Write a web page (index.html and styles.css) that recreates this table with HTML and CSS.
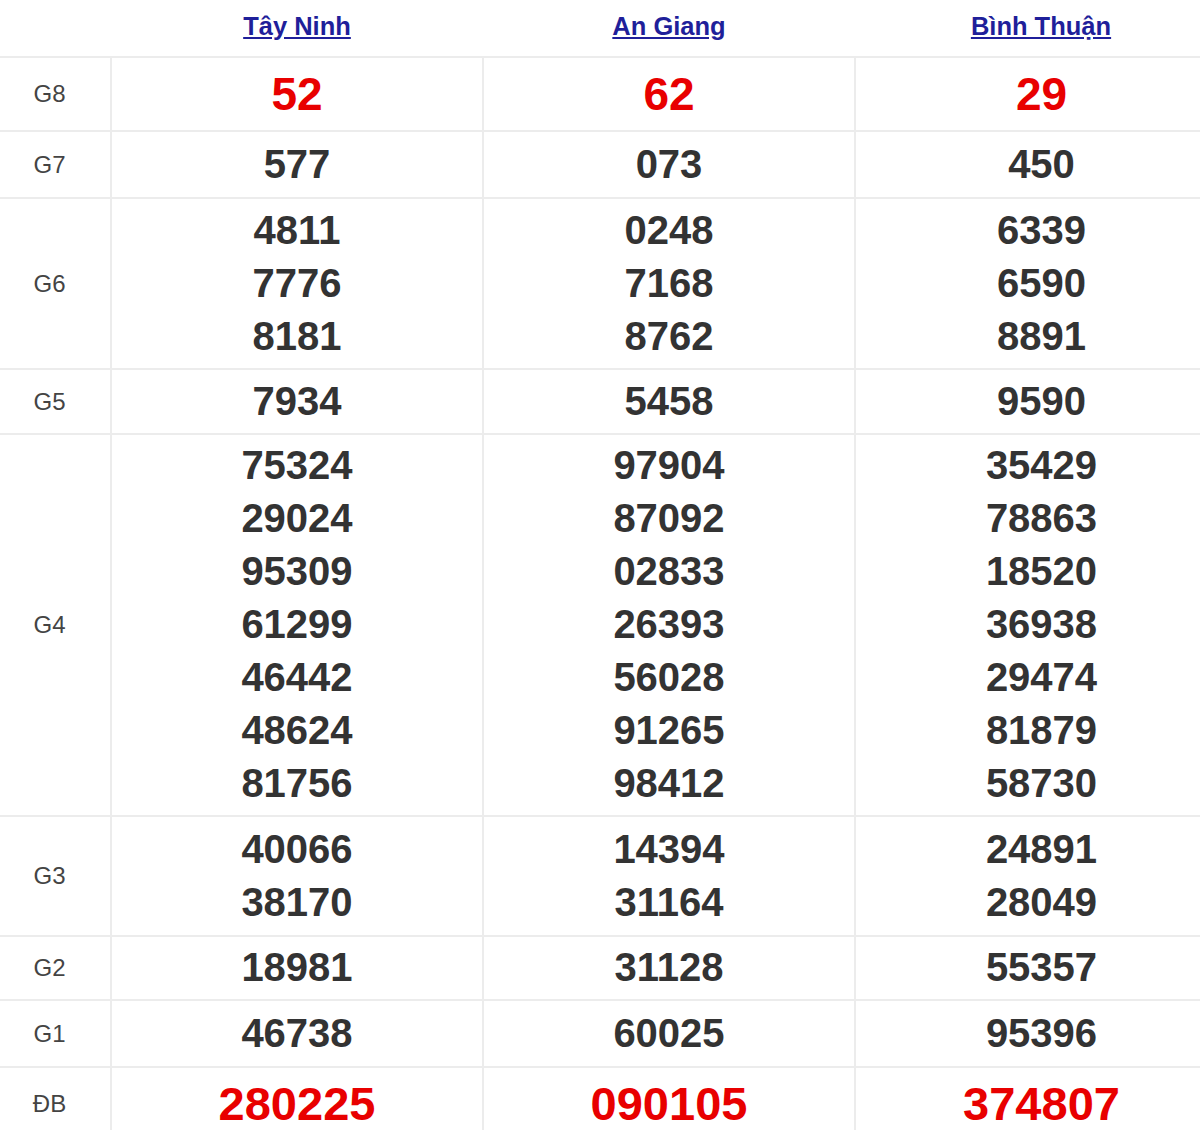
FILE: index.html
```html
<!DOCTYPE html>
<html lang="vi">
<head>
<meta charset="utf-8">
<title>Kết quả xổ số</title>
<link rel="stylesheet" href="styles.css">
</head>
<body>
<table class="kq">
  <colgroup>
    <col class="c-label">
    <col class="c-prov">
    <col class="c-prov">
    <col class="c-prov">
  </colgroup>
  <thead>
    <tr>
      <th></th>
      <th><a href="#">Tây Ninh</a></th>
      <th><a href="#">An Giang</a></th>
      <th><a href="#">Bình Thuận</a></th>
    </tr>
  </thead>
  <tbody>
    <tr class="g8">
      <td class="lbl">G8</td>
      <td class="num red"><div>52</div></td>
      <td class="num red"><div>62</div></td>
      <td class="num red"><div>29</div></td>
    </tr>
    <tr class="tall">
      <td class="lbl">G7</td>
      <td class="num"><div>577</div></td>
      <td class="num"><div>073</div></td>
      <td class="num"><div>450</div></td>
    </tr>
    <tr>
      <td class="lbl">G6</td>
      <td class="num"><div>4811</div><div>7776</div><div>8181</div></td>
      <td class="num"><div>0248</div><div>7168</div><div>8762</div></td>
      <td class="num"><div>6339</div><div>6590</div><div>8891</div></td>
    </tr>
    <tr>
      <td class="lbl">G5</td>
      <td class="num"><div>7934</div></td>
      <td class="num"><div>5458</div></td>
      <td class="num"><div>9590</div></td>
    </tr>
    <tr class="short">
      <td class="lbl">G4</td>
      <td class="num"><div>75324</div><div>29024</div><div>95309</div><div>61299</div><div>46442</div><div>48624</div><div>81756</div></td>
      <td class="num"><div>97904</div><div>87092</div><div>02833</div><div>26393</div><div>56028</div><div>91265</div><div>98412</div></td>
      <td class="num"><div>35429</div><div>78863</div><div>18520</div><div>36938</div><div>29474</div><div>81879</div><div>58730</div></td>
    </tr>
    <tr class="tall">
      <td class="lbl">G3</td>
      <td class="num"><div>40066</div><div>38170</div></td>
      <td class="num"><div>14394</div><div>31164</div></td>
      <td class="num"><div>24891</div><div>28049</div></td>
    </tr>
    <tr class="short">
      <td class="lbl">G2</td>
      <td class="num"><div>18981</div></td>
      <td class="num"><div>31128</div></td>
      <td class="num"><div>55357</div></td>
    </tr>
    <tr class="tall">
      <td class="lbl">G1</td>
      <td class="num"><div>46738</div></td>
      <td class="num"><div>60025</div></td>
      <td class="num"><div>95396</div></td>
    </tr>
    <tr class="db">
      <td class="lbl">ĐB</td>
      <td class="num red"><div>280225</div></td>
      <td class="num red"><div>090105</div></td>
      <td class="num red"><div>374807</div></td>
    </tr>
  </tbody>
</table>
</body>
</html>
```

FILE: styles.css
```css
html, body {
  margin: 0;
  padding: 0;
  overflow: hidden;
  background: #fff;
}

body {
  font-family: "Liberation Sans", Arial, sans-serif;
  color: #333;
}

.kq {
  width: 1226px;
  border-collapse: collapse;
  table-layout: fixed;
}

.c-label { width: 111px; }
.c-prov { width: 372px; }

.kq th {
  height: 52px;
  padding: 0 0 4px;
  vertical-align: middle;
  text-align: center;
  border-bottom: 2px solid #ececec;
}

.kq th a {
  font-size: 25.5px;
  font-weight: bold;
  color: #1f1f9a;
  text-decoration: underline;
}

.kq td {
  border-bottom: 2px solid #ececec;
  padding: 5px 0;
  vertical-align: middle;
  text-align: center;
}

.kq .tall td {
  padding: 6px 0;
}

.kq .short td {
  padding: 4px 0 5px;
}

.kq td.lbl {
  font-size: 24px;
  color: #444;
  padding-right: 11px;
}

.kq td.num {
  border-left: 2px solid #ececec;
  font-size: 40px;
  font-weight: bold;
  line-height: 53px;
  color: #333;
}

.kq td.red {
  color: #e80000;
}

.g8 td.num {
  font-size: 46px;
  line-height: 62px;
}

.db td.num {
  font-size: 47px;
  line-height: 62px;
}
```
